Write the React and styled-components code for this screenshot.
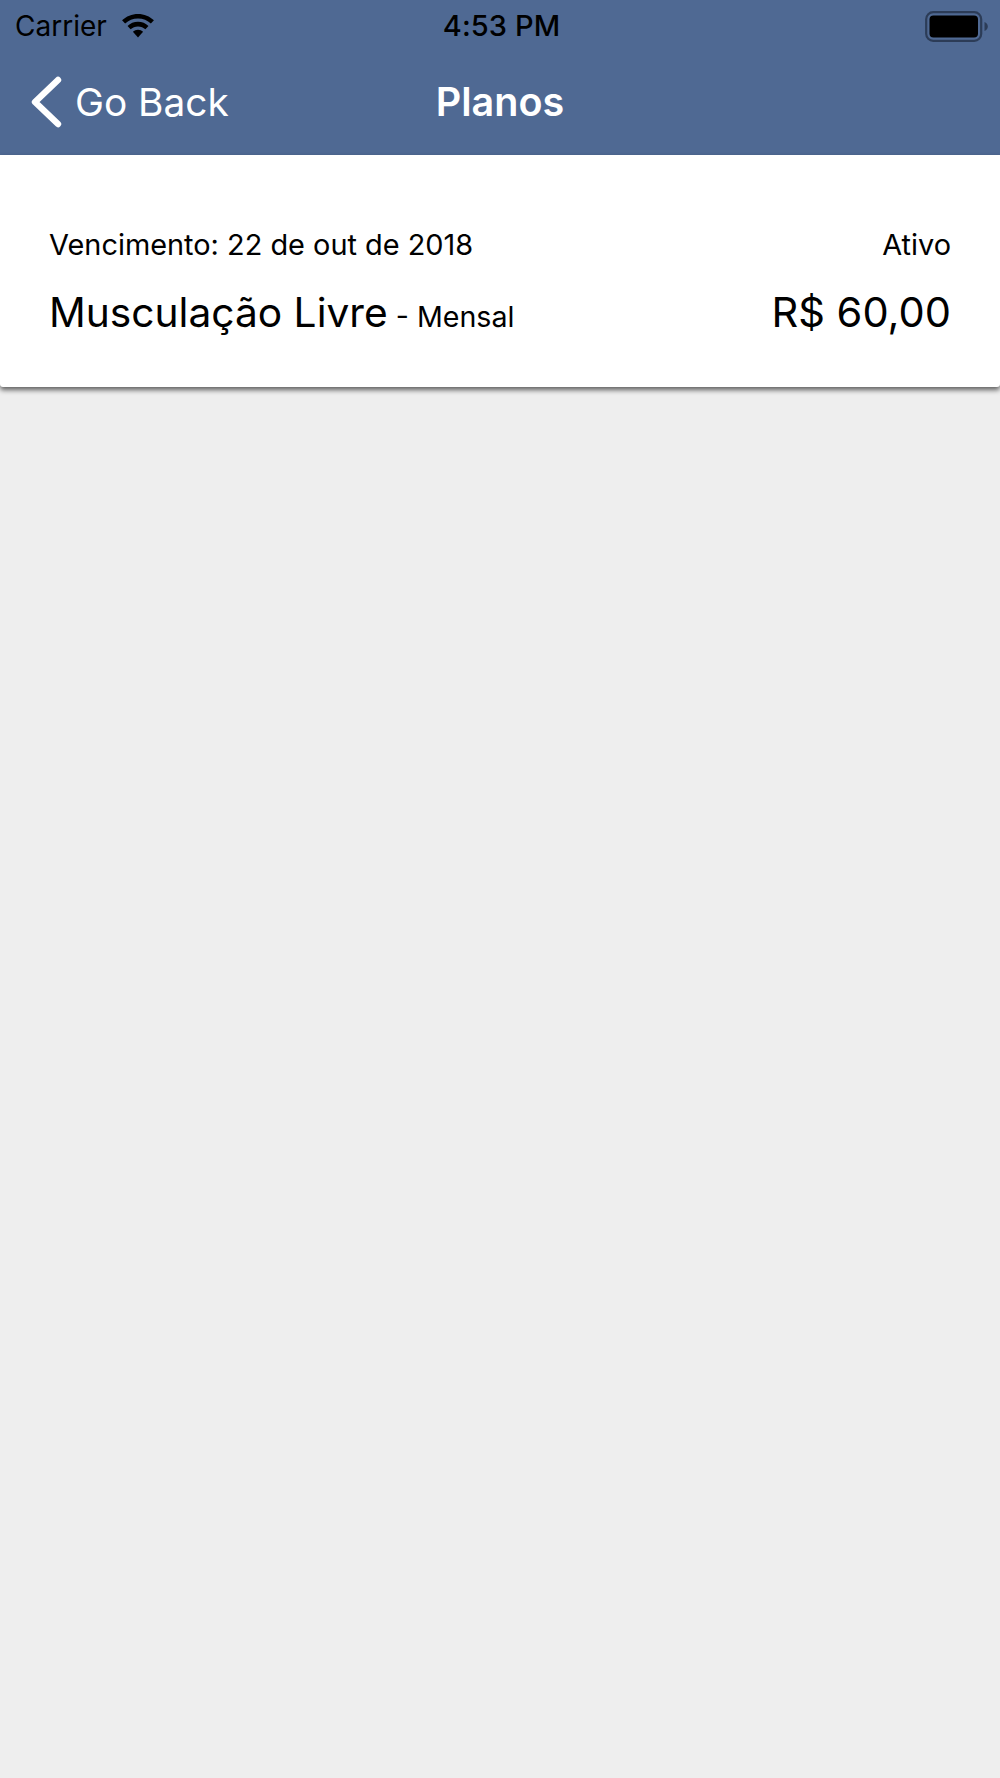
import React from "react";
import styled, { createGlobalStyle } from "styled-components";

const GlobalStyle = createGlobalStyle`
	html, body {
		margin: 0;
		padding: 0;
		background: #eeeeee;
	}
	body {
		font-family: Inter, "Liberation Sans", sans-serif;
		color: #000;
	}
`;

const WifiIcon = () => (
	<svg width="34" height="24" viewBox="0 0 34 25" fill="#000">
		<path d="M17 0C10.6 0 4.8 2.5 0.4 6.6L3.6 10C7.1 6.7 11.8 4.7 17 4.7C22.2 4.7 26.9 6.7 30.4 10L33.6 6.6C29.2 2.5 23.4 0 17 0Z" />
		<path d="M17 8.2C12.8 8.2 9 9.8 6.1 12.5L9.3 16C11.3 14.1 14 12.9 17 12.9C20 12.9 22.7 14.1 24.7 16L27.9 12.5C25 9.8 21.2 8.2 17 8.2Z" />
		<path d="M17 16.4C15 16.4 13.1 17.2 11.7 18.5L17 24.6L22.3 18.5C20.9 17.2 19 16.4 17 16.4Z" />
	</svg>
);

const BatteryIcon = () => (
	<svg width="63" height="31" viewBox="0 0 63 31">
		<rect x="1.2" y="1.2" width="55" height="28.6" rx="7" fill="none" stroke="#2c3c57" strokeWidth="2.2" />
		<rect x="4.5" y="4.5" width="48.5" height="22" rx="4" fill="#000" />
		<path d="M59.5 11C61.5 11.7 62.8 13.3 62.8 15.5C62.8 17.7 61.5 19.3 59.5 20Z" fill="#2c3c57" />
	</svg>
);

const BackIcon = () => (
	<svg width="32" height="52" viewBox="0 0 32 52">
		<path d="M28 4L5 26L28 48" fill="none" stroke="#fff" strokeWidth="6.4" strokeLinecap="round" strokeLinejoin="round" />
	</svg>
);

const App = () => {
	return (
		<Page>
			<GlobalStyle />
			<Header>
				<StatusBar>
					<StatusLeft>
						<Carrier>Carrier</Carrier>
						<WifiIcon />
					</StatusLeft>
					<Clock>4:53 PM</Clock>
					<StatusRight>
						<BatteryIcon />
					</StatusRight>
				</StatusBar>
				<NavBar>
					<BackButton>
						<BackIcon />
						<BackLabel>Go Back</BackLabel>
					</BackButton>
					<NavTitle>Planos</NavTitle>
				</NavBar>
			</Header>
			<PlanCard>
				<CardRow>
					<SmallText>Vencimento: 22 de out de 2018</SmallText>
					<SmallText>Ativo</SmallText>
				</CardRow>
				<CardRow>
					<PlanName>
						<BigText $size={40.7}>Musculação Livre</BigText>
						<Period> - Mensal</Period>
					</PlanName>
					<BigText $size={41.6}>R$ 60,00</BigText>
				</CardRow>
			</PlanCard>
		</Page>
	);
};

const Page = styled.div`
	min-height: 1778px;
	background: #eeeeee;
`;

const Header = styled.header`
	background: #4f6993;
	height: 155px;
	box-sizing: border-box;
`;

const StatusBar = styled.div`
	height: 48px;
	box-sizing: border-box;
	padding: 4px 12px 0 15px;
	display: grid;
	grid-template-columns: 1fr auto 1fr;
	align-items: center;
`;

const StatusLeft = styled.div`
	display: flex;
	align-items: center;
	gap: 14px;
`;

const StatusRight = styled.div`
	display: flex;
	justify-content: flex-end;
`;

const Carrier = styled.span`
	font-size: 28px;
	line-height: 30px;
`;

const Clock = styled.span`
	font-size: 29px;
	font-weight: 550;
	line-height: 30px;
	letter-spacing: 0.1px;
`;

const NavBar = styled.nav`
	height: 107px;
	position: relative;
	display: flex;
	align-items: center;
	justify-content: center;
	box-sizing: border-box;
`;

const BackButton = styled.div`
	position: absolute;
	left: 30px;
	top: 28px;
	display: flex;
	align-items: center;
	gap: 13px;
	color: #fff;
`;

const BackLabel = styled.span`
	font-size: 38.8px;
	line-height: 50px;
`;

const NavTitle = styled.h1`
	margin: 0;
	font-size: 39.5px;
	font-weight: 600;
	line-height: 50px;
	color: #fff;
`;

const PlanCard = styled.section`
	background: #fff;
	height: 232px;
	box-sizing: border-box;
	padding: 73px 49px 0;
	display: flex;
	flex-direction: column;
	gap: 24px;
	border-radius: 0 0 3px 3px;
	box-shadow: 0 3px 5px rgba(0, 0, 0, 0.6);
`;

const CardRow = styled.div`
	display: flex;
	justify-content: space-between;
	align-items: baseline;
`;

const SmallText = styled.span`
	font-size: 28.9px;
	line-height: 34px;
`;

const PlanName = styled.div`
	display: flex;
	align-items: baseline;
	white-space: pre;
`;

const BigText = styled.span`
	font-size: ${(p) => p.$size}px;
	line-height: 52px;
`;

const Period = styled.span`
	font-size: 28.6px;
`;

export default App;
